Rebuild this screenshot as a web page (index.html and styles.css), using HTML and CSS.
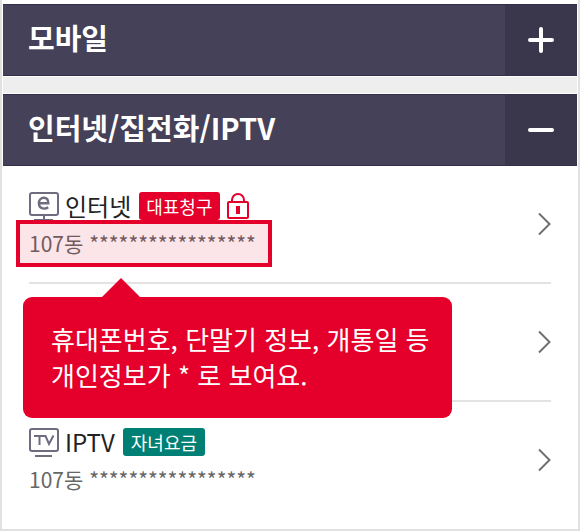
FILE: index.html
```html
<!DOCTYPE html>
<html lang="ko">
<head>
<meta charset="utf-8">
<meta name="viewport" content="width=device-width, initial-scale=1">
<link rel="stylesheet" href="styles.css">
</head>
<body>
<main class="panel">
  <h2 class="section-head">
    <button class="toggle" type="button" aria-expanded="false">
      <span class="toggle-title">모바일</span>
      <span class="toggle-mark">
        <svg width="26" height="26" viewBox="0 0 26 26" aria-hidden="true"><path d="M2 13H24M13 2V24"/></svg>
      </span>
    </button>
  </h2>
  <div class="divider"></div>
  <h2 class="section-head">
    <button class="toggle" type="button" aria-expanded="true">
      <span class="toggle-title">인터넷/집전화/IPTV</span>
      <span class="toggle-mark">
        <svg width="26" height="26" viewBox="0 0 26 26" aria-hidden="true"><path d="M2 13H24"/></svg>
      </span>
    </button>
  </h2>
  <ul class="lines">
    <li>
      <a class="line" href="#">
        <span class="line-body">
          <span class="line-title">
            <svg class="device" width="30" height="30" viewBox="0 0 30 30" aria-hidden="true">
              <rect x="1" y="2" width="28" height="22" rx="2"/>
              <path d="M15 24V29M5 29H24"/>
              <path class="glyph" d="M10 12.300H19.300C19.300 9 17.700 6.800 14.900 6.800C11.900 6.800 9.900 9.200 9.900 12.300C9.900 15.600 12 17.600 15.100 17.600C16.800 17.600 18.200 17.100 19.200 16.300"/>
            </svg>
            <span class="name">인터넷</span>
            <span class="badge badge-main">대표청구</span>
            <svg class="lock" width="22" height="26" viewBox="0 0 22 26" aria-hidden="true">
              <rect x="1" y="9" width="20" height="16" rx="1"/>
              <path d="M5 9V7A6 6 0 0 1 17 7V9"/>
              <path class="keyhole" d="M11 13V21"/>
            </svg>
          </span>
          <span class="line-detail marked">107동 *****************</span>
        </span>
        <svg class="arrow" width="14" height="24" viewBox="0 0 14 24" aria-hidden="true"><path d="M2 1.500L12.500 12L2 22.500"/></svg>
      </a>
      <div class="tip" role="tooltip">휴대폰번호, 단말기 정보, 개통일 등<br>개인정보가 * 로 보여요.</div>
    </li>
    <li>
      <a class="line" href="#">
        <span class="line-body"></span>
        <svg class="arrow" width="14" height="24" viewBox="0 0 14 24" aria-hidden="true"><path d="M2 1.500L12.500 12L2 22.500"/></svg>
      </a>
    </li>
    <li>
      <a class="line" href="#">
        <span class="line-body">
          <span class="line-title">
            <svg class="device" width="30" height="30" viewBox="0 0 30 30" aria-hidden="true">
              <rect x="1" y="2" width="28" height="22" rx="2"/>
              <path d="M6 29H23"/>
              <path class="tv" d="M5 9H16.500L20 17L24.500 8.500M10.500 9V18"/>
            </svg>
            <span class="name">IPTV</span>
            <span class="badge badge-child">자녀요금</span>
          </span>
          <span class="line-detail">107동 *****************</span>
        </span>
        <svg class="arrow" width="14" height="24" viewBox="0 0 14 24" aria-hidden="true"><path d="M2 1.500L12.500 12L2 22.500"/></svg>
      </a>
    </li>
  </ul>
</main>
</body>
</html>
```
FILE: styles.css
```css
* {
  box-sizing: border-box;
}

body {
  margin: 0;
  background: #fff;
  font-family: "Noto Sans CJK KR", "Noto Sans", sans-serif;
}

.panel {
  min-height: 100vh;
  padding: 4px 1px 0;
  border: 2px solid #e1e1e1;
  border-top: 0;
}

.section-head {
  margin: 0;
}

.toggle {
  display: flex;
  align-items: stretch;
  width: 100%;
  min-height: 72px;
  padding: 0;
  border: solid #342e4b;
  border-width: 1px 0;
  background: #454158;
  color: #fff;
  font: inherit;
  font-size: 29px;
  font-weight: 700;
  line-height: 40px;
  text-align: left;
}

.toggle-title {
  flex: 1;
  padding: 12px 25px 16px;
}

.toggle-mark {
  display: flex;
  flex: 0 0 72px;
  align-items: center;
  justify-content: center;
  background: #3a364b;
}

.toggle-mark path {
  fill: none;
  stroke: #fff;
  stroke-width: 4;
  stroke-linecap: round;
}

.divider {
  height: 18px;
  border: solid #fff;
  border-width: 1px 0;
  background: #eee;
}

.lines {
  margin: 0;
  padding: 0 26px;
  list-style: none;
}

.lines li {
  position: relative;
  border-bottom: 2px solid #e3e3e3;
}

.lines li:last-child {
  border-bottom: 0;
}

.line {
  display: flex;
  align-items: center;
  min-height: 116px;
  padding: 21px 0;
  color: #222;
  text-decoration: none;
}

.line-body {
  flex: 1;
}

.line-title {
  display: flex;
  align-items: center;
  height: 38px;
  font-size: 24px;
  line-height: 36px;
}

.name {
  margin: 0 8px 0 6px;
}

.device {
  fill: none;
  stroke: #706c80;
  stroke-width: 2;
}

.device .glyph {
  stroke-width: 2.4;
}

.badge {
  padding: 0 8px;
  border-radius: 3px;
  color: #fff;
  font-size: 18px;
  line-height: 28px;
}

.badge-main {
  padding: 0 7px;
  background: #e4002b;
}

.badge-child {
  background: #008075;
}

.lock {
  margin-left: 7px;
  fill: none;
  stroke: #e4002b;
  stroke-width: 2;
}

.lock .keyhole {
  stroke-width: 4;
}

.line-detail {
  display: inline-block;
  position: relative;
  color: #666;
  font-size: 21px;
  line-height: 36px;
}

.marked::after {
  content: "";
  position: absolute;
  inset: -5px -16px -6px -13px;
  border: 4px solid #e4002b;
  background: rgba(228, 0, 43, 0.1);
}

.arrow {
  fill: none;
  stroke: #707070;
  stroke-width: 2;
}

.tip {
  position: absolute;
  z-index: 1;
  top: 131px;
  left: -6px;
  padding: 24px 22px 25px 28px;
  border-radius: 9px;
  background: #e4002b;
  color: #fff;
  font-size: 26px;
  line-height: 36px;
  white-space: nowrap;
}

.tip::before {
  content: "";
  position: absolute;
  bottom: 100%;
  left: 79px;
  border: solid transparent;
  border-width: 0 19px 19px;
  border-bottom-color: #e4002b;
}
```
